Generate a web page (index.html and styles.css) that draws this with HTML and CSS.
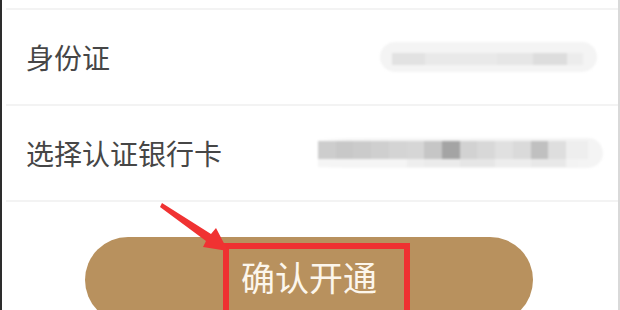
FILE: index.html
```html
<!DOCTYPE html>
<html lang="zh-CN">
<head>
<meta charset="utf-8">
<title>确认开通</title>
<link rel="stylesheet" href="styles.css">
</head>
<body>
<div class="screen">
  <div class="top-gap"></div>
  <div class="list">
    <div class="row">
      <span class="label">身份证</span>
      <div class="mask mask-id"><div class="strip strip-id"></div></div>
    </div>
    <div class="row">
      <span class="label">选择认证银行卡</span>
      <div class="mask mask-card">
        <div class="strip strip-card"></div>
        <div class="strip strip-card-low"></div>
      </div>
    </div>
  </div>
  <div class="actions">
    <button class="btn" type="button">确认开通</button>
  </div>
  <div class="highlight"></div>
  <svg class="arrow" width="620" height="310" viewBox="0 0 620 310" aria-hidden="true">
    <polygon points="162,203 211,234 216,228 228,251 203,247 206,241 160,207" fill="#f03232"/>
  </svg>
</div>
</body>
</html>
```

FILE: styles.css
```css
html, body {
  margin: 0;
  padding: 0;
  background: #ffffff;
}

.screen {
  position: relative;
  width: 620px;
  height: 310px;
  box-sizing: border-box;
  overflow: hidden;
  background: #ffffff;
  border-left: 2px solid #2d2d2d;
  border-right: 2px solid #d9d9d9;
  padding-left: 4px;
  font-family: "Noto Sans CJK SC", "Noto Sans", sans-serif;
}

.top-gap {
  height: 8px;
}

.list {
  border-bottom: 2px solid #f3f3f3;
}

.row {
  height: 94px;
  border-top: 2px solid #f3f3f3;
  display: flex;
  align-items: center;
  padding: 0 15px 0 20px;
}

.label {
  font-size: 28px;
  color: #464646;
  line-height: 1;
}

.mask {
  margin-left: auto;
  filter: blur(1px);
}

.mask-id {
  width: 217px;
  height: 30px;
  margin-right: 6px;
  border-radius: 15px;
  background: #f4f4f4;
  box-sizing: border-box;
  padding: 11px 0 0 12px;
}

.strip {
  height: 12px;
}

.strip-id {
  width: 191px;
  background: linear-gradient(90deg,
    #e2e2e2 0 33px,
    #e9e9e9 33px 105px,
    #e6e6e6 105px 141px,
    #dddddd 141px 175px,
    #ececec 175px 191px);
}

.mask-card {
  width: 285px;
  height: 30px;
  border-radius: 0 15px 15px 0;
  background: linear-gradient(90deg, #ffffff 0, #f7f7f7 30px, #f4f4f4 100%);
  box-sizing: border-box;
  padding-top: 3px;
}

.strip-card {
  height: 18px;
  width: 270px;
  background: linear-gradient(90deg,
    #cdcdcd 0 18px,
    #c8c8c8 18px 35px,
    #cbcbcb 35px 53px,
    #cfcfcf 53px 71px,
    #d4d4d4 71px 89px,
    #d6d6d6 89px 106px,
    #c6c6c6 106px 124px,
    #a4a4a4 124px 142px,
    #d2d2d2 142px 159px,
    #d8d8d8 159px 177px,
    #e0e0e0 177px 195px,
    #dadada 195px 213px,
    #c0c0c0 213px 230px,
    #dedede 230px 248px,
    #eeeeee 248px 270px);
}

.strip-card-low {
  height: 8px;
  width: 260px;
  background: linear-gradient(90deg,
    #f5f5f5 0 89px,
    #eeeeee 89px 106px,
    #ebebeb 106px 142px,
    #e6e6e6 142px 177px,
    #ededed 177px 213px,
    #e8e8e8 213px 248px,
    #f3f3f3 248px 260px);
}

.actions {
  padding: 35px 0 0 79px;
  display: flex;
}

.btn {
  width: 448px;
  height: 86px;
  flex: none;
  border: none;
  border-radius: 43px;
  background: #b8915e;
  color: #fcf6ec;
  font-family: "Noto Sans CJK SC", "Noto Sans", sans-serif;
  font-size: 34px;
  line-height: 1;
  padding: 0 0 6px 0;
  display: flex;
  align-items: center;
  justify-content: center;
}

.highlight {
  position: absolute;
  left: 221px;
  top: 243px;
  width: 187px;
  height: 90px;
  box-sizing: border-box;
  border: 6px solid #ef3131;
}

.arrow {
  position: absolute;
  left: -2px;
  top: 0;
  pointer-events: none;
}
```
